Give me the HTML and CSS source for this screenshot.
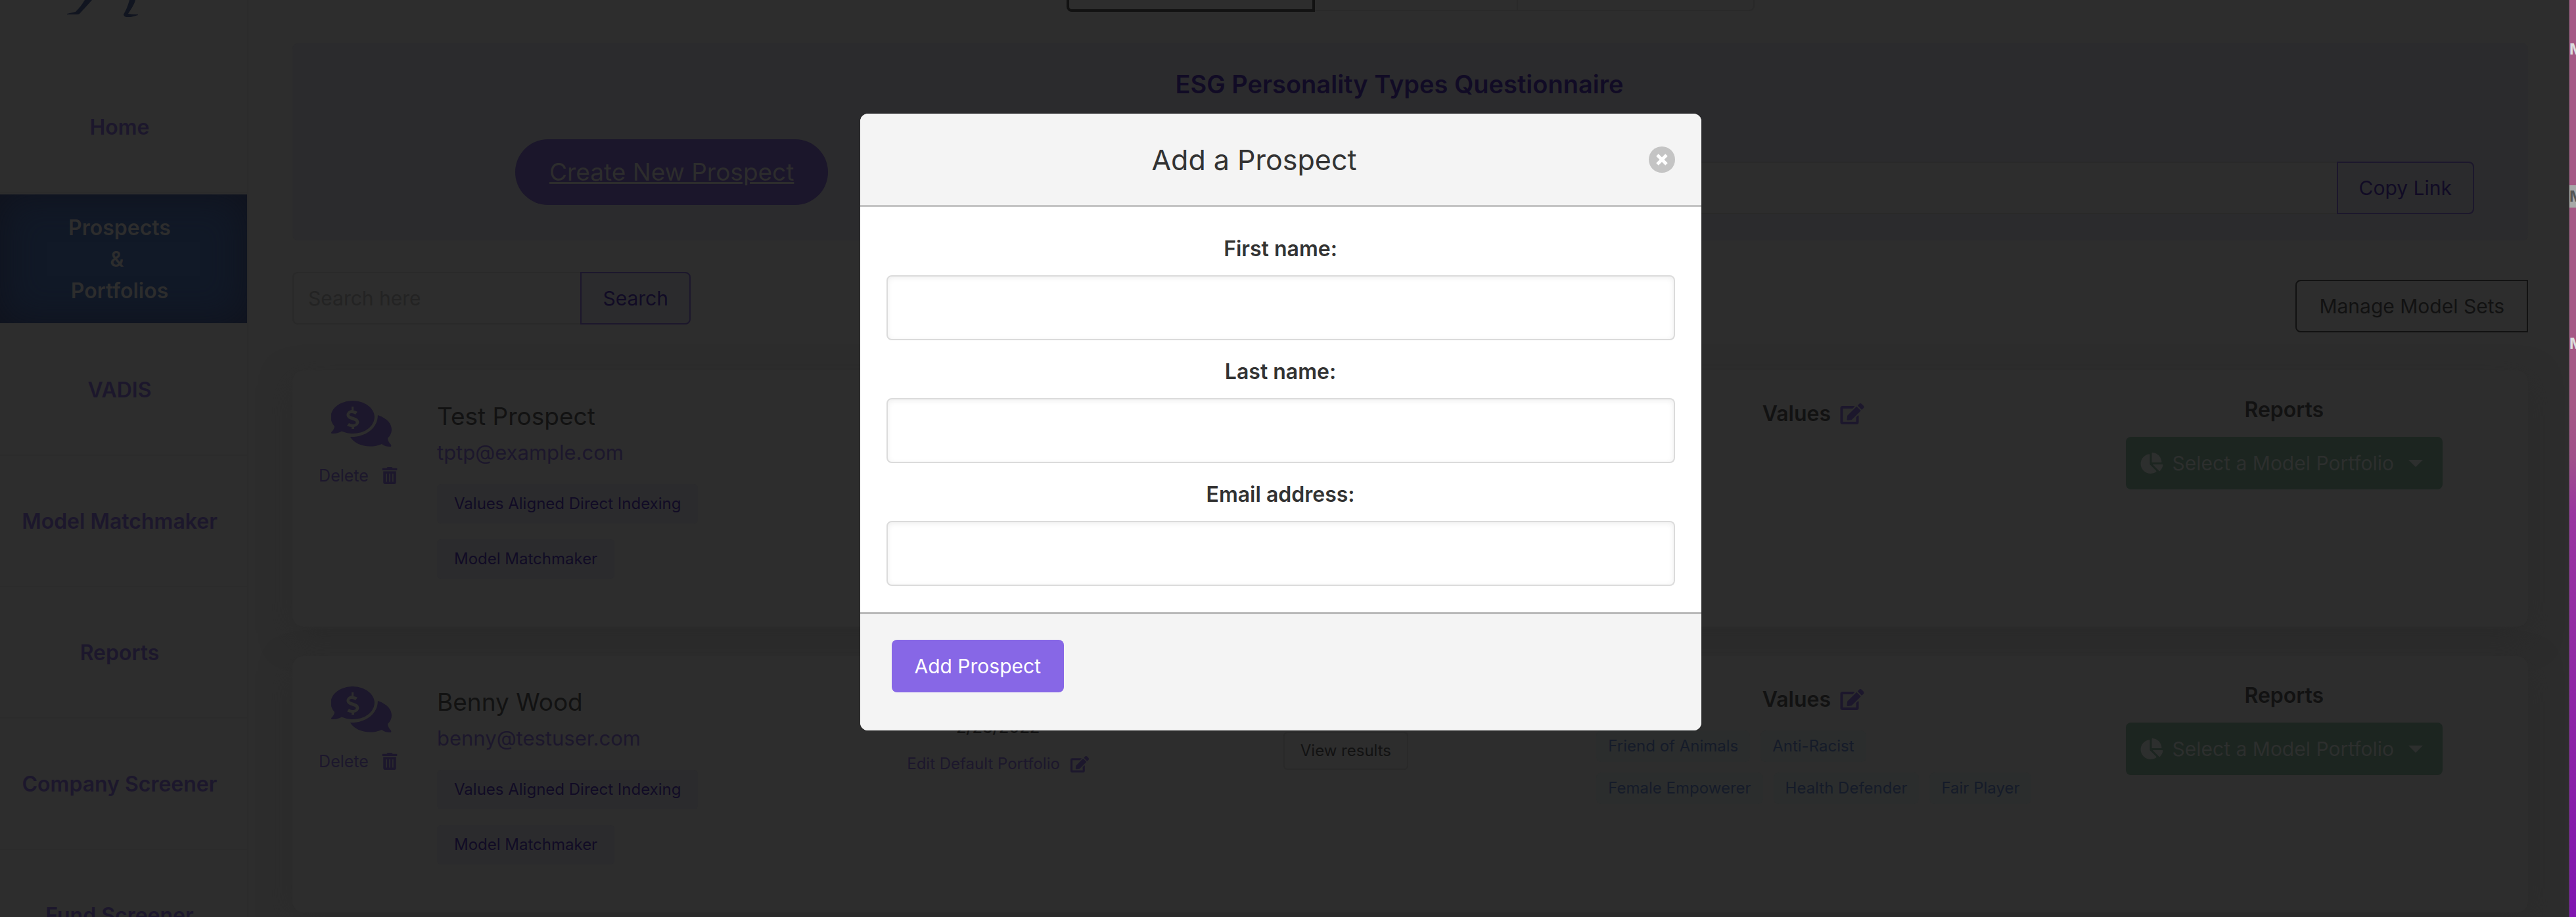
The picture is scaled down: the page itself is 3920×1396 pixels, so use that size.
FILE: index.html
```html
<!DOCTYPE html>
<html lang="en">
	<head>
		<meta charset="UTF-8">
		<title>Prospects &amp; Portfolios</title>
		<link rel="stylesheet" href="styles.css">
	</head>
	<body>
		<!-- shared icons -->
		<svg class="sprite" aria-hidden="true">
			<symbol id="i-comments" viewBox="0 0 92 70">
				<path fill-rule="evenodd" d="M33 0a33 25 0 1 1-17 46.500C11 49.500 6 50 1 50q-2-1 0-3 4-4 4-8A33 25 0 0 1 33 0zM31 9v5c-9 2-10 11-3 14l8 3c3 2 1 5-3 5-3 0-4-1-6-2l-3 4c2 1 4 2 7 2v3h4v-3c9-2 10-11 2-14l-8-3c-2-1-2-4 2-4 3 0 4 1 6 2l3-4c-2-1-3-2-6-2V9z"/>
				<path d="M71 22c24 8 25 26 15 35q0 5 5 10 1 3-1 3c-5 0-9-1-13-4-18 8-41 2-48-11 23 1 42-13 42-33z"/>
			</symbol>
			<symbol id="i-trash" viewBox="0 0 448 512">
				<path d="M32 464a48 48 0 0 0 48 48h288a48 48 0 0 0 48-48V128H32zm272-256a16 16 0 0 1 32 0v224a16 16 0 0 1-32 0zm-96 0a16 16 0 0 1 32 0v224a16 16 0 0 1-32 0zm-96 0a16 16 0 0 1 32 0v224a16 16 0 0 1-32 0zM432 32H312l-9.400-18.700A24 24 0 0 0 281.100 0H166.800a23.700 23.700 0 0 0-21.400 13.300L136 32H16A16 16 0 0 0 0 48v32a16 16 0 0 0 16 16h416a16 16 0 0 0 16-16V48a16 16 0 0 0-16-16z"/>
			</symbol>
			<symbol id="i-edit" viewBox="0 0 576 512">
				<path d="M402.600 83.200l90.200 90.200c3.800 3.800 3.800 10 0 13.800L274.400 405.600l-92.800 10.300c-12.400 1.400-22.900-9.100-21.500-21.500l10.300-92.800L388.800 83.200c3.800-3.800 10-3.800 13.800 0zm162-22.900l-48.800-48.800c-15.200-15.200-39.900-15.200-55.200 0l-35.400 35.400c-3.800 3.800-3.800 10 0 13.800l90.200 90.200c3.800 3.800 10 3.800 13.800 0l35.400-35.400c15.200-15.300 15.200-40 0-55.200zM384 346.200V448H64V128h229.800c3.200 0 6.200-1.300 8.500-3.500l40-40c7.600-7.600 2.200-20.500-8.500-20.500H48C21.500 64 0 85.500 0 112v352c0 26.500 21.500 48 48 48h352c26.500 0 48-21.500 48-48V306.200c0-10.700-12.900-16-20.500-8.500l-40 40c-2.200 2.300-3.500 5.300-3.500 8.500z"/>
			</symbol>
			<symbol id="i-pie" viewBox="0 0 544 512">
				<path d="M527.800 288H290.500l158 158c6 6 15.800 6.500 22.200.7 38.700-36.500 65.300-85.600 73.100-140.900 1.300-9.500-6.500-17.800-16-17.800zm-15.800-64.800C503.700 103.700 408.300 8.300 288.800 0 279.700-.6 272 7.100 272 16.200V240h223.800c9.100 0 16.800-7.700 16.200-16.800zM224 288V50.700c0-9.600-8.400-17.400-17.800-16C86.900 51.500-4.100 155.600.1 280.400 4.500 408.500 114.800 513.600 243 512c50.400-.6 97-16.900 135.200-44 7.900-5.600 8.400-17.200 1.600-24z"/>
			</symbol>
			<symbol id="i-close" viewBox="0 0 40 40">
				<circle cx="20" cy="20" r="20"/>
				<path class="cross" d="M13 13l14 14M27 13L13 27"/>
			</symbol>
		</svg>

		<div class="window">
			<nav class="sidebar">
				<div class="logo">
					<svg viewBox="0 0 110 26" aria-hidden="true">
						<path d="M29 0h11C33 8 27 14 21 21q-1 1-5 1H2v-1l13-3C20 13 25 7 29 0zM97 0h9c-2 8-7 14-11 21q6 1 15 1v1l-11 3c-7 1-11-1-11-4C92 15 95 8 97 0z"/>
					</svg>
				</div>
				<a class="nav-item" href="#">Home</a>
				<a class="nav-item active" href="#">Prospects<br>&amp;&nbsp;<br>Portfolios</a>
				<a class="nav-item" href="#">VADIS</a>
				<a class="nav-item" href="#">Model Matchmaker</a>
				<a class="nav-item" href="#">Reports</a>
				<a class="nav-item" href="#">Company Screener</a>
				<a class="nav-item" href="#">Fund Screener</a>
			</nav>

			<main class="main">
				<div class="tabs">
					<span class="tab current"></span>
					<span class="tab"></span>
					<span class="tab"></span>
				</div>

				<section class="banner">
					<h2>ESG Personality Types Questionnaire</h2>
					<div class="banner-row">
						<a class="create" href="#">Create New Prospect</a>
						<div class="group share">
							<input type="text" aria-label="Questionnaire link" readonly>
							<button type="button" class="outline">Copy Link</button>
						</div>
					</div>
				</section>

				<div class="toolbar">
					<div class="group search">
						<input type="text" aria-label="Search" placeholder="Search here">
						<button type="button" class="outline">Search</button>
					</div>
					<button type="button" class="manage">Manage Model Sets</button>
				</div>

				<article class="card">
					<div class="col-icon">
						<svg class="comments"><use href="#i-comments"/></svg>
						<a class="delete" href="#">Delete <svg class="trash"><use href="#i-trash"/></svg></a>
					</div>
					<div class="col-person">
						<h3>Test Prospect</h3>
						<a class="email" href="#">tptp@example.com</a>
						<span class="badge">Values Aligned Direct Indexing</span>
						<span class="badge">Model Matchmaker</span>
					</div>
					<div class="col-portfolio"></div>
					<div class="col-results"></div>
					<div class="col-values">
						<h4>Values <svg class="edit"><use href="#i-edit"/></svg></h4>
					</div>
					<div class="col-reports">
						<h4>Reports</h4>
						<button type="button" class="select-model"><svg class="pie"><use href="#i-pie"/></svg>Select a Model Portfolio<span class="caret"></span></button>
					</div>
				</article>

				<article class="card">
					<div class="col-icon">
						<svg class="comments"><use href="#i-comments"/></svg>
						<a class="delete" href="#">Delete <svg class="trash"><use href="#i-trash"/></svg></a>
					</div>
					<div class="col-person">
						<h3>Benny Wood</h3>
						<a class="email" href="#">benny@testuser.com</a>
						<span class="badge">Values Aligned Direct Indexing</span>
						<span class="badge">Model Matchmaker</span>
					</div>
					<div class="col-portfolio">
						<span class="date">2/23/2022</span>
						<a class="edit-link" href="#">Edit Default Portfolio <svg class="edit small"><use href="#i-edit"/></svg></a>
					</div>
					<div class="col-results">
						<button type="button" class="view">View results</button>
					</div>
					<div class="col-values">
						<h4>Values <svg class="edit"><use href="#i-edit"/></svg></h4>
						<div class="values">
							<span>Friend of Animals</span>
							<span>Anti-Racist</span>
						</div>
						<div class="values">
							<span>Female Empowerer</span>
							<span>Health Defender</span>
							<span>Fair Player</span>
						</div>
					</div>
					<div class="col-reports">
						<h4>Reports</h4>
						<button type="button" class="select-model"><svg class="pie"><use href="#i-pie"/></svg>Select a Model Portfolio<span class="caret"></span></button>
					</div>
				</article>
			</main>

			<!-- add prospect dialog -->
			<div class="overlay">
				<form class="modal" role="dialog" aria-labelledby="modal-title">
					<header>
						<h1 id="modal-title">Add a Prospect</h1>
						<button type="button" class="close" aria-label="Close"><svg><use href="#i-close"/></svg></button>
					</header>
					<div class="modal-body">
						<label for="first">First name:</label>
						<input type="text" id="first">
						<label for="last">Last name:</label>
						<input type="text" id="last">
						<label for="email">Email address:</label>
						<input type="email" id="email">
					</div>
					<footer>
						<button type="submit" class="add">Add Prospect</button>
					</footer>
				</form>
			</div>
		</div>

		<aside class="desktop">
			<span class="file">M</span>
			<span class="file selected">M</span>
			<span class="file">M</span>
		</aside>
	</body>
</html>
```

FILE: styles.css
```css
*{
	box-sizing: border-box;
	margin: 0;
	padding: 0;
}
body{
	display: flex;
	height: 100vh;
	overflow: hidden;
	background: #2d2d2d;
	color: #121212;
	font: 30px/48px Inter, "Liberation Sans", sans-serif;
}
a{
	text-decoration: none;
}
button, input{
	font: inherit;
	color: inherit;
}
svg{
	display: block;
	fill: currentColor;
}
.sprite{
	position: absolute;
	width: 0;
	height: 0;
}
.window{
	position: relative;
	flex: 1;
	display: flex;
	overflow: hidden;
	border-right: 1px solid #4a4a4a;
}

/* sidebar */
.sidebar{
	flex: none;
	width: 378px;
	border-right: 2px solid #2b2b2b;
}
.logo{
	height: 94px;
	padding-left: 100px;
	color: #111520;
}
.logo svg{
	width: 110px;
	height: 26px;
}
.nav-item{
	display: flex;
	align-items: center;
	justify-content: center;
	height: 200px;
	padding: 2px 12px 0 0;
	border-bottom: 2px solid #2b2b2b;
	color: #1c172c;
	font-size: 32px;
	font-weight: 600;
	text-align: center;
}
.nav-item.active{
	height: 196px;
	margin: 2px 0;
	border: 0;
	background: #111927;
	box-shadow: inset 0 0 60px #10121c;
	color: #2d2d2d;
}

/* main column */
.main{
	flex: 1;
	min-width: 0;
	padding: 0 62px 0 67px;
}
.tabs{
	display: flex;
	justify-content: center;
	height: 66px;
}
.tab{
	width: 360px;
	height: 17px;
	border: 2px solid #292929;
	border-top: 0;
	border-left: 0;
}
.tab:nth-child(2){
	width: 309px;
}
.tab:last-child{
	border-radius: 0 0 8px 0;
}
.tab.current{
	width: 378px;
	height: 18px;
	border: 4px solid #121212;
	border-top: 0;
	border-radius: 0 0 0 8px;
}
.banner{
	height: 300px;
	padding: 38px 82px 40px 339px;
	border-radius: 8px;
	background: #2b2b2d;
}
.banner h2{
	margin-right: 290px;
	color: #110b25;
	font-size: 38px;
	font-weight: 600;
	text-align: center;
}
.banner-row{
	display: flex;
	justify-content: space-between;
	align-items: flex-start;
	margin-top: 60px;
}
.create{
	padding: 26px 52px;
	border-radius: 50px;
	background: #1b162b;
	color: #2d2d2d;
	font-size: 37px;
	text-decoration: underline;
}
.group{
	display: flex;
	height: 80px;
}
.group input{
	flex: 1;
	min-width: 0;
	padding: 0 22px;
	border: 2px solid #292929;
	border-right: 0;
	border-radius: 8px 0 0 8px;
	background: #2d2d2d;
}
.group input::placeholder{
	color: #232323;
}
.outline{
	padding: 0 32px;
	border: 2px solid #1c172c;
	border-radius: 0 8px 8px 0;
	background: #2b2b2d;
	color: #110b25;
}
.share{
	width: 1400px;
	margin-top: 34px;
}
.toolbar{
	display: flex;
	justify-content: space-between;
	height: 198px;
	padding-top: 48px;
}
.search{
	width: 606px;
}
.manage{
	height: 80px;
	margin-top: 12px;
	padding: 0 34px;
	border: 2px solid #121212;
	border-radius: 8px 0 0 8px;
	background: none;
}

/* prospect cards */
.card{
	display: grid;
	grid-template-columns: 200px 620fr 506fr 552fr 870fr 562fr;
	height: 390px;
	margin-bottom: 45px;
	padding-right: 90px;
	border-radius: 16px;
	background: #2d2d2d;
	box-shadow: 0 16px 48px #2a2a2a;
}
.col-icon{
	display: flex;
	flex-direction: column;
	align-items: center;
	padding-top: 46px;
	color: #1c172c;
}
.comments{
	width: 92px;
	height: 70px;
	margin-left: 10px;
}
.delete{
	display: flex;
	align-items: center;
	gap: 20px;
	margin-top: 20px;
	color: #1c172c;
	font-size: 25px;
}
.trash{
	width: 24px;
	height: 26px;
}
.col-person{
	display: flex;
	flex-direction: column;
	align-items: flex-start;
	padding: 46px 0 0 20px;
}
h3{
	font-size: 37px;
	font-weight: 400;
}
.email{
	margin-top: 7px;
	color: #1c172c;
	font-size: 31px;
}
.badge{
	margin-top: 24px;
	padding: 6px 26px;
	border-radius: 6px;
	background: #2b2b2d;
	color: #110b25;
	font-size: 24px;
}
.col-portfolio, .col-results, .col-values, .col-reports{
	display: flex;
	flex-direction: column;
	align-items: center;
}
.date{
	margin-top: 84px;
	font-size: 25px;
	font-weight: 500;
}
.edit-link{
	display: flex;
	align-items: center;
	gap: 16px;
	margin-top: 8px;
	color: #1c172c;
	font-size: 24px;
}
.view{
	height: 58px;
	margin-top: 115px;
	padding: 0 24px;
	border: 2px solid #292929;
	border-radius: 6px;
	background: none;
	font-size: 24px;
}
h4{
	display: flex;
	align-items: center;
	gap: 14px;
	font-size: 32px;
	font-weight: 600;
}
.col-values{
	padding-top: 42px;
}
.edit{
	width: 37px;
	height: 32px;
	color: #1c172c;
}
.edit.small{
	width: 28px;
	height: 25px;
}
.values{
	display: flex;
	gap: 16px;
	width: 660px;
	margin-top: 16px;
	white-space: nowrap;
}
h4 + .values{
	margin-top: 23px;
}
.values span{
	padding: 0 18px;
	border-radius: 8px;
	background: #2b2d2d;
	color: #151b29;
	font-size: 24px;
}
.col-reports{
	padding-top: 36px;
}
.select-model{
	display: flex;
	align-items: center;
	height: 80px;
	margin-top: 17px;
	padding: 0 30px 0 22px;
	border: 0;
	border-radius: 8px;
	background: #1c2520;
	color: #2d2f2e;
}
.pie{
	width: 35px;
	height: 32px;
	margin-right: 14px;
}
.caret{
	margin-left: 22px;
	border: 11px solid transparent;
	border-top-color: #2d2f2e;
	border-bottom: 0;
}

/* dialog */
.overlay{
	position: absolute;
	inset: 0;
	padding: 173px 12px 0 0;
}
.modal{
	width: 1280px;
	margin: 0 auto;
	overflow: hidden;
	border-radius: 12px;
	background: #fff;
	color: #333;
}
.modal header{
	display: flex;
	align-items: center;
	height: 142px;
	padding: 0 40px;
	border-bottom: 3px solid #c4c4c4;
	background: #f4f4f4;
}
.modal h1{
	flex: 1;
	padding-right: 40px;
	font-size: 43px;
	font-weight: 400;
	text-align: center;
}
.close{
	width: 40px;
	height: 40px;
	border: 0;
	background: none;
	color: #c4c4c4;
}
.close svg{
	width: 40px;
	height: 40px;
}
.cross{
	fill: none;
	stroke: #fff;
	stroke-width: 5;
}
.modal-body{
	padding: 40px;
}
.modal-body label{
	display: block;
	padding-bottom: 16px;
	font-size: 32px;
	font-weight: 600;
	text-align: center;
}
.modal-body input{
	display: block;
	width: 100%;
	height: 99px;
	margin-bottom: 24px;
	padding: 0 24px;
	border: 2px solid #dbdbdb;
	border-radius: 8px;
	box-shadow: inset 0 2px 8px #eee;
}
.modal-body input:last-child{
	margin-bottom: 0;
}
.modal footer{
	height: 180px;
	padding: 39px 48px;
	border-top: 3px solid #b8b8b8;
	background: #f4f4f4;
}
.add{
	height: 80px;
	padding: 0 35px;
	border: 0;
	border-radius: 8px;
	background: #8767e6;
	color: #fff;
}

/* strip of the desktop beside the window */
.desktop{
	flex: none;
	display: flex;
	flex-direction: column;
	gap: 190px;
	width: 10px;
	padding-top: 58px;
	overflow: hidden;
	background: linear-gradient(#a55885, #a55885 44%, #a0508a 50%, #9a35a0 56%, #8a1fa8 85%, #7f14b0);
}
.file{
	height: 34px;
	color: #ddd;
	font-size: 23px;
	font-weight: 700;
	line-height: 34px;
}
.file.selected{
	background: #a8a8a8;
	color: #555;
}
```
